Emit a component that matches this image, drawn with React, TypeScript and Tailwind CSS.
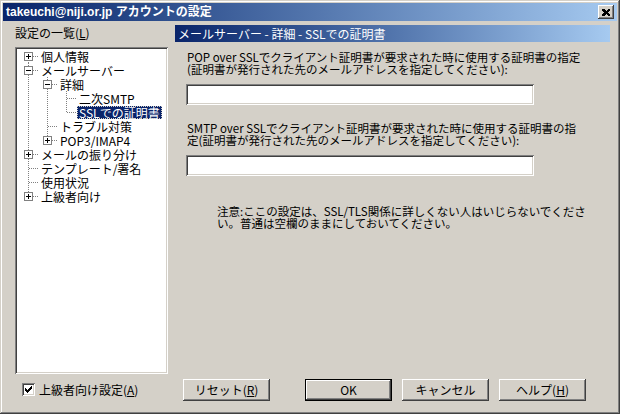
const raised = "shadow-[inset_-1px_-1px_#404040,inset_1px_1px_#ffffff,inset_-2px_-2px_#808080,inset_2px_2px_#d4d0c8]";
const sunken = "shadow-[inset_1px_1px_#808080,inset_-1px_-1px_#ffffff,inset_2px_2px_#404040,inset_-2px_-2px_#d4d0c8]";

type Row = {
    label: string;
    level: number;
    anc: boolean[];
    last?: boolean;
    first?: boolean;
    exp?: "+" | "-";
    selected?: boolean;
};

const rows: Row[] = [
    { label: "個人情報", level: 0, anc: [], first: true, exp: "+" },
    { label: "メールサーバー", level: 0, anc: [], exp: "-" },
    { label: "詳細", level: 1, anc: [true], exp: "-" },
    { label: "二次SMTP", level: 2, anc: [true, true] },
    { label: "SSLでの証明書", level: 2, anc: [true, true], last: true, selected: true },
    { label: "トラブル対策", level: 1, anc: [true] },
    { label: "POP3/IMAP4", level: 1, anc: [true], last: true, exp: "+" },
    { label: "メールの振り分け", level: 0, anc: [], exp: "+" },
    { label: "テンプレート/署名", level: 0, anc: [] },
    { label: "使用状況", level: 0, anc: [] },
    { label: "上級者向け", level: 0, anc: [], last: true, exp: "+" },
];

function Cell({ vert, row }: { vert?: boolean; row?: Row }) {
    return (
        <svg width="19" height="14" viewBox="0 0 19 14" shapeRendering="crispEdges" className="shrink-0">
            {vert && <line x1="8.5" y1="0" x2="8.5" y2="14" stroke="#808080" strokeDasharray="1 1" />}
            {row && (
                <>
                    <line x1="8.5" y1={row.first ? 7 : 0} x2="8.5" y2={row.last ? 8 : 14} stroke="#808080" strokeDasharray="1 1" />
                    <line x1="9" y1="7.5" x2="19" y2="7.5" stroke="#808080" strokeDasharray="1 1" />
                    {row.exp && (
                        <>
                            <rect x="4.5" y="3.5" width="8" height="8" fill="#ffffff" stroke="#808080" />
                            <line x1="6" y1="7.5" x2="11" y2="7.5" stroke="#000000" />
                            {row.exp === "+" && <line x1="8.5" y1="5" x2="8.5" y2="10" stroke="#000000" />}
                        </>
                    )}
                </>
            )}
        </svg>
    );
}

function TreeRow({ row }: { row: Row }) {
    return (
        <div className="flex h-[14px] items-center">
            {row.anc.map((v, i) => (
                <Cell key={i} vert={v} />
            ))}
            <Cell row={row} />
            <span
                className={
                    "px-[2px] leading-[13px] whitespace-nowrap " +
                    (row.selected ? "bg-[#0a246a] text-white outline outline-1 outline-dotted outline-[#d4d0c8] -outline-offset-1" : "")
                }
            >
                {row.label}
            </span>
        </div>
    );
}

function Button({ children, def }: { children: React.ReactNode; def?: boolean }) {
    return (
        <div
            className={
                "w-[87px] h-[22px] flex items-center justify-center bg-[#d4d0c8] " +
                (def ? "border border-black " : "") +
                raised
            }
        >
            {children}
        </div>
    );
}

export default function App() {
    return (
        <div
            className={
                "w-[620px] h-[414px] bg-[#d4d0c8] p-[3px] text-[12px] leading-[12px] text-black font-['Noto_Sans_CJK_JP','Noto_Sans',sans-serif] overflow-hidden " +
                "shadow-[inset_-1px_-1px_#404040,inset_1px_1px_#d4d0c8,inset_-2px_-2px_#808080,inset_2px_2px_#ffffff]"
            }
        >
            <div className="h-[18px] flex items-center bg-gradient-to-r from-[#0a246a] to-[#a6caf0] pl-[3px] pr-[3px]">
                <span className="text-white font-bold whitespace-nowrap font-['Liberation_Sans','Noto_Sans_CJK_JP',sans-serif] text-[12px]">
                    takeuchi@niji.or.jp アカウントの設定
                </span>
                <div className={"ml-auto w-[16px] h-[14px] bg-[#d4d0c8] flex items-center justify-center " + raised}>
                    <svg width="8" height="7" viewBox="0 0 8 7" shapeRendering="crispEdges">
                        <path d="M0 0h2l2 2 2-2h2v1l-2 2.5 2 2.5v1h-2l-2-2-2 2h-2v-1l2-2.5-2-2.5z" fill="#000" />
                    </svg>
                </div>
            </div>

            <div className="flex">
                <div className="ml-[12px] w-[153px] flex flex-col">
                    <div className="mt-[6px] h-[12px] whitespace-nowrap">
                        設定の一覧(<span className="underline">L</span>)
                    </div>
                    <div className={"mt-[8px] h-[327px] bg-white pt-[2px] pl-[5px] " + sunken}>
                        {rows.map((r, i) => (
                            <TreeRow key={i} row={r} />
                        ))}
                    </div>
                    <div className="mt-[9px] flex items-center h-[13px] pl-[7px]">
                        <div className={"w-[13px] h-[13px] bg-white flex items-center justify-center " + sunken}>
                            <svg width="7" height="7" viewBox="0 0 7 7" shapeRendering="crispEdges">
                                <path d="M0 2h1v1h1v1h1v-1h1v-1h1v-1h1v-1h1v3h-1v1h-1v1h-1v1h-1v1h-1v-1h-1v-1h-1z" fill="#000" />
                            </svg>
                        </div>
                        <span className="ml-[4px] whitespace-nowrap">
                            上級者向け設定(<span className="underline">A</span>)
                        </span>
                    </div>
                </div>

                <div className="ml-[7px] w-[435px] flex flex-col">
                    <div className="mt-[4px] h-[17px] flex items-center pl-[3px] bg-gradient-to-r from-[#0a246a] to-[#a6caf0] text-white whitespace-nowrap">
                        メールサーバー - 詳細 - SSLでの証明書
                    </div>
                    <div className="mt-[9px] pl-[12px] whitespace-nowrap text-[11.5px]">
                        <div>POP over SSLでクライアント証明書が要求された時に使用する証明書の指定</div>
                        <div>(証明書が発行された先のメールアドレスを指定してください):</div>
                    </div>
                    <div className={"mt-[9px] ml-[11px] w-[348px] h-[21px] bg-white " + sunken} />
                    <div className="mt-[17px] pl-[12px] whitespace-nowrap text-[11.5px]">
                        <div>SMTP over SSLでクライアント証明書が要求された時に使用する証明書の指</div>
                        <div>定(証明書が発行された先のメールアドレスを指定してください):</div>
                    </div>
                    <div className={"mt-[9px] ml-[11px] w-[348px] h-[21px] bg-white " + sunken} />
                    <div className="mt-[29px] pl-[42px] whitespace-nowrap text-[11.5px]">
                        <div>注意:ここの設定は、SSL/TLS関係に詳しくない人はいじらないでくださ</div>
                        <div>い。普通は空欄のままにしておいてください。</div>
                    </div>
                    <div className="mt-[150px] ml-[8px] flex">
                        <Button>
                            リセット(<span className="underline">R</span>)
                        </Button>
                        <div className="ml-[35px]">
                            <Button def>OK</Button>
                        </div>
                        <div className="ml-[10px]">
                            <Button>キャンセル</Button>
                        </div>
                        <div className="ml-[10px]">
                            <Button>
                                ヘルプ(<span className="underline">H</span>)
                            </Button>
                        </div>
                    </div>
                </div>
            </div>
        </div>
    );
}
